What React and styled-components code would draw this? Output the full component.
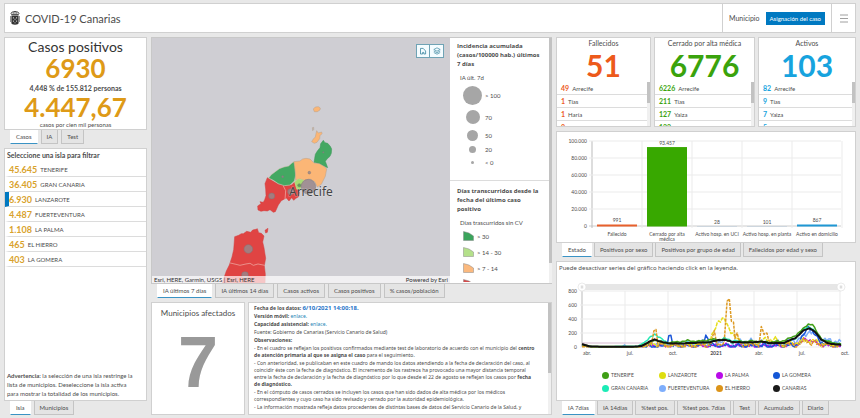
import React, { useState } from "react";
import styled, { createGlobalStyle } from "styled-components";

const islands = [
	{ cases: "45.645", name: "TENERIFE" },
	{ cases: "36.405", name: "GRAN CANARIA" },
	{ cases: "6.930", name: "LANZAROTE" },
	{ cases: "4.487", name: "FUERTEVENTURA" },
	{ cases: "1.108", name: "LA PALMA" },
	{ cases: "465", name: "EL HIERRO" },
	{ cases: "403", name: "LA GOMERA" },
];

const cards = [
	{
		title: "Fallecidos",
		total: "51",
		color: "#ed5a1b",
		rows: [["49", "Arrecife"], ["1", "Tías"], ["1", "Haría"], ["0", "San Bartolomé"]],
	},
	{
		title: "Cerrado por alta médica",
		total: "6776",
		color: "#3aa30c",
		rows: [["6226", "Arrecife"], ["211", "Tías"], ["127", "Yaiza"], ["122", "Teguise"]],
	},
	{
		title: "Activos",
		total: "103",
		color: "#17a3de",
		rows: [["82", "Arrecife"], ["9", "Tías"], ["7", "Yaiza"], ["5", "Teguise"]],
	},
];

const bars = [
	{ label: ["Fallecido"], value: 991, text: "991", color: "#e8602c" },
	{ label: ["Cerrado por alta", "médica"], value: 93457, text: "93.457", color: "#38a800" },
	{ label: ["Activo hosp. en UCI"], value: 28, text: "28", color: "#b4c7d6" },
	{ label: ["Activo hosp. en planta"], value: 101, text: "101", color: "#b4c7d6" },
	{ label: ["Activo en domicilio"], value: 867, text: "867", color: "#1f97d4" },
];

// [months since april 2020, incidence]
const series = [
	{
		color: "#7eaefc",
		noise: 26,
		points: [[0, 20], [0.6, 4], [2.8, 4], [3, 30], [3.1, 5], [4.2, 8], [5, 50], [6, 40], [7, 45], [8, 40], [9, 60], [10, 95], [11, 70], [12, 75], [13, 60], [14, 60], [15, 90], [15.6, 150], [16, 240], [16.6, 140], [17.2, 90], [18.2, 80]],
	},
	{
		color: "#b90be8",
		noise: 18,
		points: [[0, 40], [0.7, 4], [4, 4], [5, 20], [6, 22], [8, 20], [9, 15], [10, 20], [12, 15], [14, 14], [15.4, 60], [15.8, 120], [16.4, 60], [17.2, 20], [18.2, 12]],
	},
	{
		color: "#1a55d8",
		noise: 22,
		points: [[0, 16], [0.6, 3], [5.7, 6], [6, 90], [6.1, 180], [6.25, 160], [6.4, 12], [8.3, 20], [8.6, 120], [8.7, 185], [8.85, 130], [9, 20], [11, 14], [13, 16], [14.8, 20], [15.3, 60], [15.8, 260], [15.9, 320], [16.3, 180], [17, 40], [18.2, 14]],
	},
	{
		color: "#25e8b4",
		noise: 8,
		points: [[0, 30], [0.7, 4], [3.9, 6], [4.5, 80], [5.1, 190], [5.6, 110], [6, 60], [7, 55], [8, 60], [9, 75], [10, 120], [10.6, 90], [12, 75], [13, 60], [14.3, 60], [15, 130], [15.6, 260], [16, 290], [16.5, 190], [17, 90], [18.2, 35]],
	},
	{
		color: "#e6df1c",
		dash: "4 1",
		noise: 22,
		points: [[0, 16], [0.7, 3], [4.2, 3], [5, 50], [6, 25], [8, 30], [9, 80], [9.4, 280], [9.6, 390], [10, 400], [10.2, 300], [10.6, 200], [11, 80], [12, 40], [13, 110], [13.6, 110], [14, 40], [15, 60], [16, 100], [17, 40], [18.2, 20]],
	},
	{
		color: "#dd9a24",
		dash: "3 1",
		noise: 26,
		points: [[0, 3], [4.6, 4], [4.9, 30], [5.05, 275], [5.2, 250], [5.35, 30], [7, 15], [9, 20], [9.3, 190], [9.5, 60], [10, 40], [10.2, 660], [10.35, 675], [10.5, 400], [10.65, 380], [10.75, 100], [10.9, 200], [11.1, 30], [12.4, 40], [12.6, 260], [12.8, 180], [13, 170], [13.3, 80], [14, 30], [15.2, 20], [15.7, 110], [16, 60], [17, 30], [18.2, 12]],
	},
	{
		color: "#43a018",
		noise: 7,
		points: [[0, 40], [0.7, 5], [3.9, 6], [4.6, 50], [5.1, 105], [5.7, 60], [6.6, 70], [7.4, 90], [8.2, 80], [9, 105], [9.8, 110], [10.6, 70], [12, 85], [13, 70], [14, 80], [14.8, 140], [15.4, 230], [15.9, 330], [16.2, 320], [16.6, 180], [17, 90], [18.2, 40]],
	},
	{
		color: "#111",
		width: 2,
		noise: 2,
		points: [[0, 40], [0.5, 10], [1.2, 4], [3.6, 4], [4.2, 15], [4.6, 60], [5.1, 110], [5.6, 70], [6.2, 52], [7, 50], [8, 60], [9, 70], [9.6, 100], [10.1, 100], [10.7, 70], [12, 65], [12.5, 80], [13.2, 55], [14.2, 60], [15, 130], [15.6, 240], [16, 270], [16.4, 210], [16.8, 110], [17.3, 50], [18.2, 30]],
	},
];

const legend = [
	["TENERIFE", "#3f9f16"],
	["LANZAROTE", "#dede10"],
	["LA PALMA", "#b90be8"],
	["LA GOMERA", "#1457d6"],
	["GRAN CANARIA", "#1cebb6"],
	["FUERTEVENTURA", "#7eaefc"],
	["EL HIERRO", "#dc9419"],
	["CANARIAS", "#1a1a1a"],
];

function linePath({ points, noise }) {
	const out = [];
	points.forEach(([m, v], i) => {
		const next = points[i + 1];
		if (!next) {
			out.push([m, v]);
			return;
		}
		const steps = Math.max(1, Math.round((next[0] - m) / 0.12));
		for (let s = 0; s < steps; s++) {
			const t = s / steps;
			const month = m + (next[0] - m) * t;
			const shake = month > 4.4 ? Math.sin(month * 17 + noise) * noise + Math.sin(month * 7) * noise : 0;
			out.push([month, Math.max(2, v + (next[1] - v) * t + shake)]);
		}
	});
	return out
		.map(([m, v], i) => `${i ? "L" : "M"}${(582 + m * 14.23).toFixed(1)} ${(347 - v * 0.07).toFixed(1)}`)
		.join("");
}

function Tabs({ items, gap }) {
	const [active, setActive] = useState(0);

	return (
		<TabBar $gap={gap}>
			{items.map((item, i) => (
				<Tab key={item} type="button" $active={i === active} onClick={() => setActive(i)}>
					{item}
				</Tab>
			))}
		</TabBar>
	);
}

function CountCard({ card }) {
	return (
		<Panel>
			<CardTitle>{card.title}</CardTitle>
			<CardTotal $color={card.color}>{card.total}</CardTotal>
			<CardBody>
				<CardList>
					{card.rows.map(([num, name]) => (
						<CardRow key={name}>
							<CardNum $color={card.color}>{num}</CardNum>
							{name}
						</CardRow>
					))}
				</CardList>
				<Track>
					<Thumb $size="48%" />
				</Track>
			</CardBody>
		</Panel>
	);
}

function IslandMap() {
	return (
		<MapSvg viewBox="152 38 298 245" preserveAspectRatio="xMidYMid slice">
			<g transform="translate(230 95) scale(0.3333)" stroke="#b9a08a" strokeWidth="1.5" strokeLinejoin="round">
				<path fill="#fbb676" d="M250 42l6-6 9-1 6 4-1 6-8 5-9 0z" />
				<path fill="#bbb" d="M247 98l4-1 0 7-3 3z" />
				<path fill="#fbb676" d="M245 140l5-8 6-6 2-10 2-9 5 7 10-3 1 5-6 6-1 9-8 11-8 3z" />
				<path fill="#43a862" stroke="#3c9759" d="M252 202l2-12 2-12 6-10 8-10 2-12 8-10 5 7 8 2 8 9 4 8-1 13-4 9-8 7-6 8 3 8 4 11-12-5-12-7z" />
				<path fill="#e04443" stroke="#d23c3c" d="M112 248l33 20 20 5 20-3 8-8 6 18 9 12 -2 13-8 5-7 6-6-8-8 10-8-9-15 8-9 13-9 20-6 2-10-8-8 4-10-1-9 2-9-4-1-12 10-7-3-6 10 2 4-8 4-12-1-20-2-16z" />
				<path fill="#43a862" stroke="#d9c3b0" d="M116 249l8-10 12-9 12-9 14-5 14-3 10-9 6-4 3 15 2 25-4 18-13 12-17 2-18-6-15-10z" />
				<path fill="#fbb676" d="M192 200l18-2 8-6 10-2 12 2 12 12 16 2 17 10 5 6-4 22-12 24-12 8-8-16-14-8-18 4-12-4-13 4-1-24z" />
				<path fill="#a7dc72" stroke="#c5d98f" d="M194 260l11-8 17 4-6 14-6 14-10-1z" />
				<path fill="#e04443" stroke="#d23c3c" d="M105 406l9-6-2 12-5 2z" />
				<path fill="#e04443" stroke="#d23c3c" d="M14 425l12-4 8-5 6 0 10-7 12 3 6-7 10-2 4-2 4 12 8 2 8 8-4 18 4 17 5 32-4 22 3 26-1 30-130 0 14-40 9-18 8-24 5-22z" />
				<path fill="none" stroke="#f0b5ae" strokeWidth="2" d="M0 504l18 4 12 3 18-4 12-2 10 6 14-4 20 4M160 273l7 14-2 28" />
				<g fill="#99868a" fillOpacity="0.85" stroke="#80787a">
					<circle cx="238" cy="233" r="4" />
					<circle cx="158" cy="245" r="3" />
					<circle cx="280" cy="172" r="2" />
					<circle cx="208" cy="271" r="5" fill="#4d9b50" />
					<circle cx="125" cy="303" r="9" />
					<circle cx="182" cy="290" r="9" />
					<circle cx="235" cy="275" r="22" />
					<circle cx="55" cy="462" r="13" />
					<circle cx="45" cy="540" r="10" />
				</g>
			</g>
			<MapLabel x="289" y="196">
				Arrecife
			</MapLabel>
		</MapSvg>
	);
}

function BarChart() {
	return (
		<Chart viewBox="557 132 298 110">
			{[0, 1, 2, 3, 4, 5].map((i) => (
				<g key={i}>
					<line x1="589" x2="841" y1={226 - i * 17} y2={226 - i * 17} stroke={i ? "#ebebeb" : "#ccc"} />
					<line x1={592 + i * 50} x2={592 + i * 50} y1="141" y2="228" stroke={i ? "#ebebeb" : "#bbb"} />
					<text x="587" y={228 - i * 17} textAnchor="end">
						{i ? `${i * 20}.000` : "0"}
					</text>
				</g>
			))}
			{bars.map((bar, i) => {
				const height = Math.max(bar.value > 500 ? 2 : 0.5, (bar.value / 100000) * 85);
				const center = 617 + i * 50;
				return (
					<g key={bar.text} textAnchor="middle">
						<rect x={center - 20} y={226.5 - height} width="40" height={height} fill={bar.color} />
						<text x={center} y={224 - height}>
							{bar.text}
						</text>
						{bar.label.map((line, n) => (
							<text key={line} x={center} y={236 + n * 5}>
								{line}
							</text>
						))}
					</g>
				);
			})}
		</Chart>
	);
}

function TrendChart() {
	return (
		<Chart viewBox="557 281 298 76">
			<rect x="582" y="284" width="259" height="6" fill="#e6e6e6" />
			{["abr.", "jul.", "oct.", "2021", "abr.", "jul.", "oct."].map((month, i) => (
				<g key={i}>
					<line x1={582 + i * 43} x2={582 + i * 43} y1="291" y2="347" stroke={i ? "#ebebeb" : "#bbb"} />
					<text x={587 + i * 43} y="355" textAnchor="middle" fontWeight={month === "2021" ? 700 : 400}>
						{month}
					</text>
				</g>
			))}
			{[0, 200, 400, 600, 800].map((tick) => (
				<g key={tick}>
					<line x1="580" x2="841" y1={347 - tick * 0.07} y2={347 - tick * 0.07} stroke="#ebebeb" />
					<text x="577" y={349 - tick * 0.07} textAnchor="end">
						{tick}
					</text>
				</g>
			))}
			<path d="M582 343H652" stroke="#b98bb0" strokeWidth="0.6" />
			{series.map((s) => (
				<path
					key={s.color}
					d={linePath(s)}
					fill="none"
					stroke={s.color}
					strokeWidth={s.width || 1.5}
					strokeDasharray={s.dash}
					strokeLinejoin="round"
				/>
			))}
			{[582, 841].map((x) => (
				<g key={x}>
					<circle cx={x} cy="287" r="4" fill="#fff" stroke="#ddd" strokeWidth="0.6" />
					<path d={`M${x - 0.7} 285.5v3M${x + 0.7} 285.5v3`} stroke="#bbb" strokeWidth="0.6" />
				</g>
			))}
		</Chart>
	);
}

function App() {
	const [island, setIsland] = useState("LANZAROTE");

	return (
		<Page>
			<GlobalStyle />
			<Header>
				<Crest viewBox="0 0 10 16" aria-hidden="true">
					<path d="M1 3.2C2 1 8 1 9 3.2L8.4 4.6H1.6z" fill="none" stroke="#333" strokeWidth="0.9" />
					<path d="M3.2 2v2M5 1v3M6.8 2v2" stroke="#333" strokeWidth="0.7" />
					<path d="M1.4 5.4h7.2v7.6c0 1-1.4 1.6-3.6 1.8-2.2-.2-3.6-.8-3.6-1.8z" fill="#333" />
					<path d="M3.4 7v1.6M6.6 7v1.6M5 8.6v1.6M3.4 10.4V12M6.6 10.4V12M5 12.2v1.2" stroke="#ccc" strokeWidth="0.8" />
					<path d="M.5 6v6M9.5 6v6" stroke="#666" strokeWidth="0.7" />
				</Crest>
				<Title>COVID-19 Canarias</Title>
				<Selector>
					<span>Municipio</span>
					<PrimaryButton type="button">Asignación del caso</PrimaryButton>
				</Selector>
				<MenuButton type="button" aria-label="Menú">
					<svg width="10" height="9" viewBox="0 0 10 9">
						<path d="M1 1h8M1 4.5h8M1 8h8" stroke="#888" strokeWidth="0.8" />
					</svg>
				</MenuButton>
			</Header>

			<Columns>
				<Column>
					<Totals>
						<TotalsTitle>Casos positivos</TotalsTitle>
						<TotalsNum>6930</TotalsNum>
						<TotalsNote $strong>4,448 % de 155.812 personas</TotalsNote>
						<TotalsNum>4.447,67</TotalsNum>
						<TotalsNote>casos por cien mil personas</TotalsNote>
					</Totals>
					<Tabs items={["Casos", "IA", "Test"]} gap={3} />
					<Spacer />
					<Panel $grow>
						<ListTitle>Seleccione una isla para filtrar</ListTitle>
						<IslandList>
							{islands.map((it) => (
								<li key={it.name}>
									<IslandButton
										type="button"
										$selected={it.name === island}
										onClick={() => setIsland(it.name)}
									>
										<b>{it.cases}</b>
										{it.name}
									</IslandButton>
								</li>
							))}
						</IslandList>
						<Warning>
							<b>Advertencia:</b> la selección de una isla restringe la
							<br />
							lista de municipios. Deseleccione la isla activa
							<br />
							para mostrar la totalidad de los municipios.
						</Warning>
					</Panel>
					<Tabs items={["Isla", "Municipios"]} gap={3} />
				</Column>

				<Column>
					<MapPanel>
						<MapArea>
							<IslandMap />
							<MapTools>
								<ToolButton type="button" aria-label="Inicio">
									<svg width="8" height="8" viewBox="0 0 8 8" fill="none" stroke="#3b87a0" strokeWidth="0.8">
										<path d="M1.5 7V1.4h2.7L6.6 4V7H4.8V5.4H3.6V7z" />
									</svg>
								</ToolButton>
								<ToolButton type="button" aria-label="Capas">
									<svg width="8" height="8" viewBox="0 0 8 8" fill="none" stroke="#3b87a0" strokeWidth="0.7">
										<path d="M4 .8l3.2 1.7L4 4.2.8 2.5zM.8 4L4 5.7 7.2 4M.8 5.5L4 7.2l3.2-1.7" />
									</svg>
								</ToolButton>
							</MapTools>
							<Attribution>
								<span>Esri, HERE, Garmin, USGS | Esri, HERE</span>
								<span>Powered by Esri</span>
							</Attribution>
						</MapArea>
						<Legend>
							<LegendTitle>
								Incidencia acumulada
								<br />
								(casos/100000 hab.) últimos
								<br />7 días
							</LegendTitle>
							<LegendSub>IA últ. 7d</LegendSub>
							{[["> 100", 19, 24], ["70", 14, 20], ["50", 11, 16], ["20", 7, 13], ["< 0", 3, 13]].map(([text, size, row]) => (
								<SizeRow key={text} $height={row}>
									<DotCell>
										<Dot $size={size} $color="#a6a6a6" />
									</DotCell>
									{text}
								</SizeRow>
							))}
							<Rule />
							<LegendTitle>
								Días transcurridos desde la
								<br />
								fecha del último caso
								<br />
								positivo
							</LegendTitle>
							<LegendSub>Días trascurridos sin CV</LegendSub>
							{[["> 30", "#3ba45c"], ["> 14 - 30", "#b4e08a"], ["> 7 - 14", "#fbb97e"], ["", "#d64a4a"]].map(([text, color]) => (
								<SizeRow key={color} $height={16}>
									<svg width="11" height="10" viewBox="0 0 11 10">
										<path d="M.5.5L6 2l4.5 3v4.5H.5z" fill={color} stroke="#888" strokeWidth="0.5" />
									</svg>
									{text}
								</SizeRow>
							))}
						</Legend>
						<Track>
							<Thumb $size="92%" />
						</Track>
					</MapPanel>
					<Tabs
						items={["IA últimos 7 días", "IA últimos 14 días", "Casos activos", "Casos positivos", "% casos/población"]}
						gap={3}
					/>
					<Spacer />
					<Bottom>
						<Panel>
							<TownTitle>Municipios afectados</TownTitle>
							<TownCount>7</TownCount>
						</Panel>
						<NotesPanel>
							<Notes>
								<p>
									<b>Fecha de los datos:</b> <Stamp>6/10/2021 14:00:18.</Stamp>
								</p>
								<p>
									<b>Versión móvil:</b> <a href="#movil">enlace.</a>
								</p>
								<p>
									<b>Capacidad asistencial:</b> <a href="#capacidad">enlace.</a>
								</p>
								<p>Fuente: Gobierno de Canarias (Servicio Canario de Salud)</p>
								<p>
									<b>Observaciones:</b>
								</p>
								<p>
									- En el cuadro se reflejan los positivos confirmados mediante test de laboratorio de acuerdo con el municipio del <b>centro</b>
									<br />
									<b>de atención primaria al que se asigna el caso</b> para el seguimiento.
								</p>
								<p>
									- Con anterioridad, se publicaban en este cuadro de mando los datos atendiendo a la fecha de declaración del caso, al
									<br />
									coincidir éste con la fecha de diagnóstico. El incremento de los rastreos ha provocado una mayor distancia temporal
									<br />
									entre la fecha de declaración y la fecha de diagnóstico por lo que desde el 22 de agosto se reflejan los casos por <b>fecha</b>
									<br />
									<b>de diagnóstico.</b>
								</p>
								<p>
									- En el cómputo de casos cerrados se incluyen los casos que han sido dados de alta médica por los médicos
									<br />
									correspondientes y cuyo caso ha sido revisado y cerrado por la autoridad epidemiológica.
								</p>
								<p>- La información mostrada refleja datos procedentes de distintas bases de datos del Servicio Canario de la Salud, y</p>
							</Notes>
							<Track>
								<Thumb $size="63%" />
							</Track>
						</NotesPanel>
					</Bottom>
				</Column>

				<Column>
					<Cards>
						{cards.map((card) => (
							<CountCard key={card.title} card={card} />
						))}
					</Cards>
					<Spacer />
					<ChartPanel>
						<BarChart />
					</ChartPanel>
					<Tabs
						items={["Estado", "Positivos por sexo", "Positivos por grupo de edad", "Fallecidos por edad y sexo"]}
						gap={2}
					/>
					<Spacer />
					<Panel $grow>
						<Hint>Puede desactivar series del gráfico haciendo click en la leyenda.</Hint>
						<TrendChart />
						<SeriesLegend>
							{legend.map(([name, color]) => (
								<SeriesItem key={name}>
									<Dot $size={7} $color={color} />
									{name}
								</SeriesItem>
							))}
						</SeriesLegend>
					</Panel>
					<Tabs
						items={["IA 7días", "IA 14días", "%test pos.", "%test pos. 7días", "Test", "Acumulado", "Diario"]}
						gap={2}
					/>
				</Column>
			</Columns>
		</Page>
	);
}

const GlobalStyle = createGlobalStyle`
	* {
		box-sizing: border-box;
	}

	body {
		margin: 0;
		background: #e8e8e8;
		color: #4c4c4c;
		font-family: Lato, "Liberation Sans", sans-serif;
		font-size: 6px;
	}

	h1, h2, p, ul {
		margin: 0;
		padding: 0;
		font-weight: 400;
	}

	ul {
		list-style: none;
	}

	button {
		font: inherit;
		color: inherit;
		cursor: pointer;
	}

	a {
		color: #2484b5;
		text-decoration: none;
	}
`;

const Page = styled.div`
	display: flex;
	flex-direction: column;
	gap: 4px;
	min-height: 100vh;
	padding: 3px 4px 4px;
`;

const Header = styled.header`
	display: flex;
	align-items: stretch;
	height: 30px;
	background: #fff;
	border: 1px solid #d0d0d0;
`;

const Crest = styled.svg`
	width: 10px;
	height: 16px;
	align-self: center;
	margin: 0 5px;
`;

const Title = styled.h1`
	flex: 1;
	align-self: center;
	font-size: 11px;
`;

const Selector = styled.div`
	display: flex;
	align-items: center;
	gap: 6px;
	padding: 0 6px;
	border-left: 1px solid #d0d0d0;
	font-size: 7px;
`;

const PrimaryButton = styled.button`
	height: 13px;
	padding: 0 4px;
	border: 0;
	background: #0079c1;
	color: #fff;
	font-size: 6px;
`;

const MenuButton = styled.button`
	display: flex;
	align-items: center;
	justify-content: center;
	width: 24px;
	padding: 0;
	border: 0;
	border-left: 1px solid #d0d0d0;
	background: none;
`;

const Columns = styled.main`
	flex: 1;
	display: grid;
	grid-template-columns: 143fr 401fr 300fr;
	gap: 4px;
`;

const Column = styled.section`
	display: flex;
	flex-direction: column;
	min-width: 0;
`;

const Spacer = styled.div`
	height: 4px;
`;

const Panel = styled.div`
	display: flex;
	flex-direction: column;
	flex: ${({ $grow }) => ($grow ? "1" : "none")};
	min-width: 0;
	overflow: hidden;
	background: #fff;
	border: 1px solid #d0d0d0;
`;

const TabBar = styled.div`
	display: flex;
	gap: ${({ $gap }) => $gap}px;
	height: 14px;
	padding-left: 6px;
`;

const Tab = styled.button`
	padding: 0 5px;
	border: 1px solid ${({ $active }) => ($active ? "transparent" : "#c4c4c4")};
	border-top: 0;
	border-bottom-color: ${({ $active }) => ($active ? "#3a93c4" : "#c4c4c4")};
	background: ${({ $active }) => ($active ? "#fff" : "#e4e4e4")};
	white-space: nowrap;
`;

const Totals = styled(Panel)`
	height: 93px;
	text-align: center;
`;

const TotalsTitle = styled.h2`
	font-size: 14px;
	line-height: 17px;
	color: #333;
`;

const TotalsNum = styled.div`
	font-size: 26px;
	font-weight: 700;
	line-height: 27px;
	color: #de9a17;
`;

const TotalsNote = styled.div`
	font-size: ${({ $strong }) => ($strong ? 7 : 6)}px;
	line-height: ${({ $strong }) => ($strong ? 12 : 8)}px;
	font-weight: ${({ $strong }) => ($strong ? 700 : 400)};
`;

const ListTitle = styled.h2`
	padding-left: 2px;
	font-size: 7px;
	font-weight: 700;
	line-height: 13px;
`;

const IslandList = styled.ul`
	flex: 1;
`;

const IslandButton = styled.button`
	display: flex;
	align-items: center;
	gap: 3px;
	width: 100%;
	height: 15px;
	padding: 0;
	border: 0;
	border-left: 4px solid ${({ $selected }) => ($selected ? "#0079c1" : "transparent")};
	border-bottom: 1px solid #dcdcdc;
	background: none;

	& > b {
		font-size: 9px;
		color: #d9a22c;
	}
`;

const Warning = styled.p`
	padding: 0 2px 2px;
	line-height: 9px;
	white-space: nowrap;
`;

const MapPanel = styled.div`
	flex: 1;
	display: flex;
	min-height: 246px;
	max-height: 60vh;
	background: #fff;
	border: 1px solid #c8c8c8;
	border-right: 0;
`;

const MapArea = styled.div`
	position: relative;
	flex: 1;
	display: flex;
	min-width: 0;
	background: #cfced3;
`;

const MapSvg = styled.svg`
	width: 100%;
	height: 100%;
`;

const MapLabel = styled.text`
	font-family: "Noto Sans", sans-serif;
	font-size: 12px;
	fill: #444;
	stroke: #fff;
	stroke-opacity: 0.3;
	paint-order: stroke;
`;

const MapTools = styled.div`
	position: absolute;
	top: 6px;
	right: 6px;
	display: flex;
`;

const ToolButton = styled.button`
	display: flex;
	align-items: center;
	justify-content: center;
	width: 14px;
	height: 14px;
	padding: 0;
	border: 1px solid #6fa3b5;
	background: #f4fcff;

	& + & {
		border-left: 0;
	}
`;

const Attribution = styled.div`
	position: absolute;
	left: 0;
	right: 0;
	bottom: 0;
	display: flex;
	justify-content: space-between;
	padding: 0 2px;
	background: rgba(255, 255, 255, 0.7);
	color: #323232;
	line-height: 7px;
`;

const Legend = styled.div`
	display: flex;
	flex-direction: column;
	width: 99px;
	height: 244px;
	padding-top: 4px;
	overflow: hidden;
`;

const LegendTitle = styled.h2`
	padding-left: 7px;
	font-family: "Open Sans", sans-serif;
	font-size: 6px;
	font-weight: 700;
	line-height: 9px;
	white-space: nowrap;
`;

const LegendSub = styled.div`
	padding: 4px 0 1px 10px;
	line-height: 9px;
`;

const SizeRow = styled.div`
	display: flex;
	flex: none;
	align-items: center;
	gap: 3px;
	height: ${({ $height }) => $height}px;
	padding-left: 13px;
`;

const DotCell = styled.span`
	display: flex;
	justify-content: center;
	width: 19px;
`;

const Dot = styled.span`
	flex: none;
	width: ${({ $size }) => $size}px;
	height: ${({ $size }) => $size}px;
	border-radius: 50%;
	background: ${({ $color }) => $color};
`;

const Rule = styled.div`
	flex: none;
	height: 1px;
	margin: 11px 0 6px;
	background: #dcdcdc;
`;

const Track = styled.div`
	flex: none;
	width: 3px;
	background: #f0f0f0;
`;

const Thumb = styled.div`
	height: ${({ $size }) => $size};
	background: #c2c2c2;
`;

const Bottom = styled.div`
	display: grid;
	grid-template-columns: 94fr 304fr;
	gap: 3px;
	height: 113px;
`;

const TownTitle = styled.h2`
	padding-top: 4px;
	font-size: 8px;
	line-height: 12px;
	text-align: center;
	white-space: nowrap;
`;

const TownCount = styled.div`
	font-family: "Liberation Sans", sans-serif;
	font-size: 72px;
	font-weight: 700;
	line-height: 86px;
	text-align: center;
	color: #999;
`;

const NotesPanel = styled(Panel)`
	flex-direction: row;
`;

const Notes = styled.div`
	flex: 1;
	display: flex;
	flex-direction: column;
	gap: 1px;
	min-width: 0;
	padding: 2px 5px;
	font-family: "Noto Sans", sans-serif;
	font-size: 5px;
	line-height: 7px;
	white-space: nowrap;
	overflow: hidden;
`;

const Stamp = styled.b`
	font-size: 6px;
	color: #1f74c9;
`;

const Cards = styled.div`
	display: grid;
	grid-template-columns: 95fr 101fr 98fr;
	gap: 3px;
	height: 90px;
`;

const CardTitle = styled.h2`
	font-size: 7px;
	line-height: 10px;
	text-align: center;
	white-space: nowrap;
`;

const CardTotal = styled.div`
	font-size: 30px;
	font-weight: 700;
	line-height: 34px;
	text-align: center;
	color: ${({ $color }) => $color};
`;

const CardBody = styled.div`
	flex: 1;
	display: flex;
	min-height: 0;
`;

const CardList = styled.ul`
	flex: 1;
	overflow: hidden;
`;

const CardRow = styled.li`
	display: flex;
	align-items: center;
	gap: 3px;
	height: 13px;
	padding-left: 4px;
	border-bottom: 1px solid #dcdcdc;
`;

const CardNum = styled.b`
	font-size: 7px;
	color: ${({ $color }) => $color};
`;

const Chart = styled.svg`
	display: block;
	width: 100%;
	font-size: 5px;
	fill: #4c4c4c;
`;

const ChartPanel = styled(Panel)`
	min-height: 112px;
`;

const Hint = styled.p`
	padding: 2px 2px 8px;
	font-family: "Noto Sans", sans-serif;
	line-height: 9px;
`;

const SeriesLegend = styled.ul`
	display: grid;
	grid-template-columns: repeat(4, 1fr);
	row-gap: 5px;
	padding: 14px 25px 0 45px;
	font-size: 5px;
	line-height: 8px;
`;

const SeriesItem = styled.li`
	display: flex;
	align-items: center;
	gap: 2px;
`;

export default App;
